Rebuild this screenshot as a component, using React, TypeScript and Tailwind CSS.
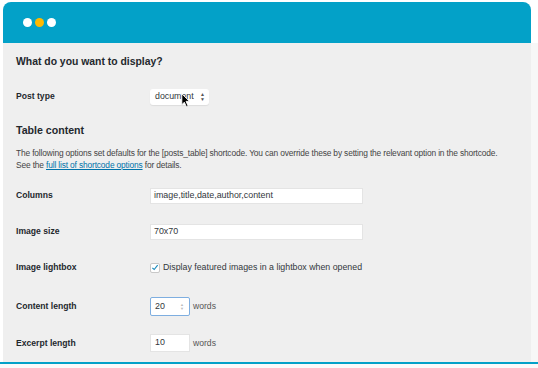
import React from 'react';

const font = { fontFamily: '"Liberation Sans", Arial, sans-serif' };

const Label = ({ children }: { children: React.ReactNode }) => (
  <div className="w-[134px] shrink-0 text-[8.6px] font-bold text-[#23282d]">{children}</div>
);

const App = () => {
  return (
    <div className="w-[538px] h-[368px] bg-white flex flex-col overflow-hidden" style={font}>
      {/* window header */}
      <div className="h-[43px] pt-[2px] pl-[3px] pr-[7px] shrink-0">
        <div className="h-[41px] rounded-t-[8px] bg-[#03a1c8] flex items-center gap-[3px] pl-[20px]">
          <span className="w-[9px] h-[9px] rounded-full bg-white" />
          <span className="w-[9px] h-[9px] rounded-full bg-[#ffb900]" />
          <span className="w-[9px] h-[9px] rounded-full bg-white" />
        </div>
      </div>

      <div className="flex h-[319px] shrink-0">
        <div className="w-[3px] bg-white" />
        <div className="w-[528px] bg-[#efefef] pl-[13px] pt-[10px] relative">
          <h2 className="h-[18px] leading-[18px] text-[10.4px] font-bold text-[#23282d]">What do you want to display?</h2>

          <div className="mt-[16px] h-[19px] flex items-center">
            <Label>Post type</Label>
            <div className="h-[16px] w-[59px] bg-white rounded-[3px] shadow-[0_1px_1px_rgba(0,0,0,0.08)] flex items-center justify-between pl-[5px] pr-[4px] text-[8.8px] text-[#32373c]">
              <span>document</span>
              <span className="text-[5px] leading-[5px] text-[#555] flex flex-col items-center">
                <span>▲</span>
                <span>▼</span>
              </span>
            </div>
          </div>

          <h3 className="mt-[14px] h-[20px] leading-[20px] text-[10.6px] font-bold text-[#23282d]">Table content</h3>

          <p className="mt-[7px] text-[8.4px] leading-[12px] tracking-[-0.15px] whitespace-nowrap text-[#444]">
            The following options set defaults for the [posts_table] shortcode. You can override these by setting the relevant option in the shortcode.
            <br />
            See the <span className="text-[#0073aa] underline">full list of shortcode options</span> for details.
          </p>

          <div className="mt-[16px] h-[17px] flex items-center">
            <Label>Columns</Label>
            <div className="h-[16px] w-[213px] bg-white border border-[#e4e4e4] flex items-center pl-[3px] text-[8.9px] text-[#32373c]">
              image,title,date,author,content
            </div>
          </div>

          <div className="mt-[19px] h-[17px] flex items-center">
            <Label>Image size</Label>
            <div className="h-[16px] w-[213px] bg-white border border-[#e4e4e4] flex items-center pl-[3px] text-[8.9px] text-[#32373c]">
              70x70
            </div>
          </div>

          <div className="mt-[19px] h-[17px] flex items-center">
            <Label>Image lightbox</Label>
            <div className="flex items-center gap-[3px]">
              <span className="w-[10px] h-[10px] bg-white border border-[#c8c8c8] rounded-[2px] flex items-center justify-center">
                <svg viewBox="0 0 12 12" className="w-[9px] h-[9px]">
                  <path d="M2 6.5 L4.8 9 L10 2.5" fill="none" stroke="#1e8cbe" strokeWidth="1.8" />
                </svg>
              </span>
              <span className="text-[8.8px] text-[#32373c]">Display featured images in a lightbox when opened</span>
            </div>
          </div>

          <div className="mt-[21px] h-[19px] flex items-center">
            <Label>Content length</Label>
            <div className="h-[19px] w-[40px] bg-white border border-[#7eaee0] rounded-[2px] flex items-center justify-between pl-[4px] pr-[5px] text-[8.9px] text-[#32373c]">
              <span>20</span>
              <span className="text-[4px] leading-[4px] text-[#bbb] flex flex-col">
                <span>▲</span>
                <span>▼</span>
              </span>
            </div>
            <span className="ml-[3px] text-[8.6px] text-[#555]">words</span>
          </div>

          <div className="mt-[18px] h-[18px] flex items-center">
            <Label>Excerpt length</Label>
            <div className="h-[18px] w-[40px] bg-white border border-[#e4e4e4] flex items-center pl-[4px] text-[8.9px] text-[#32373c]">
              10
            </div>
            <span className="ml-[3px] text-[8.6px] text-[#555]">words</span>
          </div>

          {/* mouse cursor */}
          <svg viewBox="0 0 12 18" className="absolute left-[178px] top-[50px] w-[10px] h-[15px]">
            <path d="M1 1 L1 14 L4 11 L6.5 16.5 L8.5 15.5 L6 10 L10 10 Z" fill="#000" stroke="#fff" strokeWidth="1" strokeLinejoin="round" />
          </svg>
        </div>
        <div className="flex-1 bg-[#f7f7f7]" />
      </div>

      <div className="h-[2px] bg-[#03a1c8] shrink-0" />
      <div className="flex-1 bg-[#fafafa]" />
    </div>
  );
};

export default App;
